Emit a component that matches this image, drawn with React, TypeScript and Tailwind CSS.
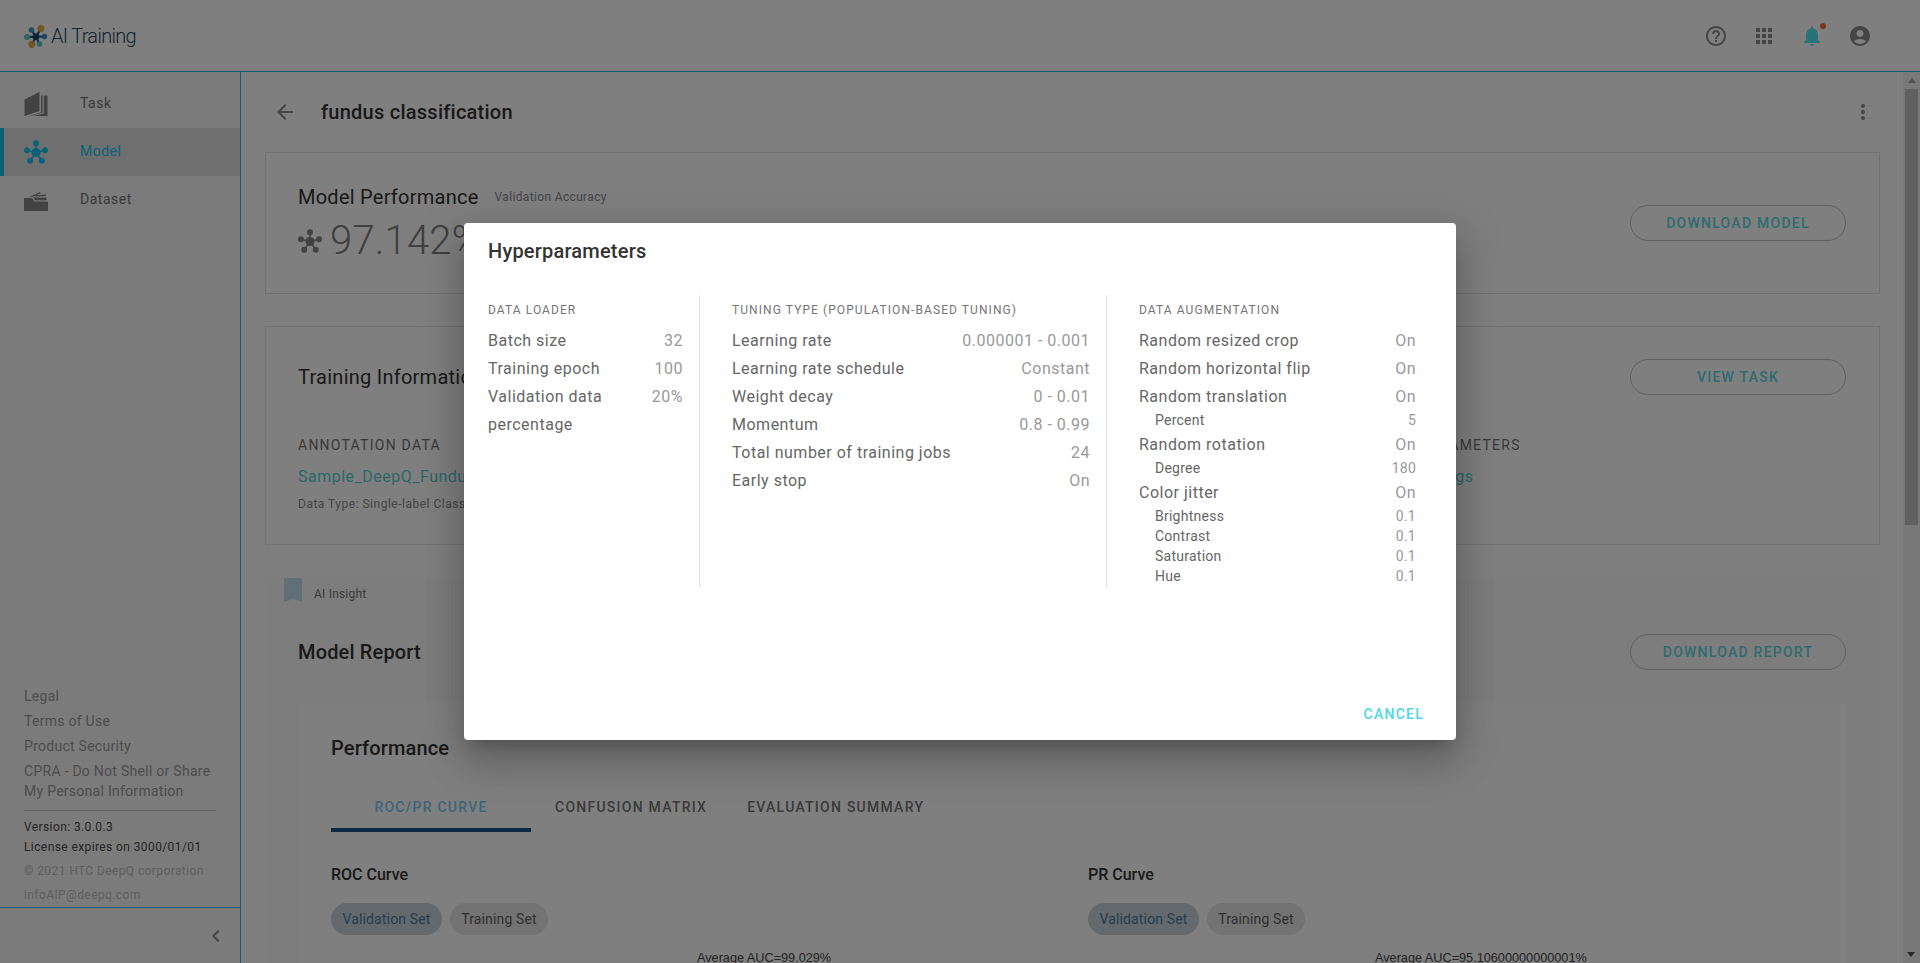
import React from 'react';
import {MdAccountCircle, MdApps, MdArrowBack, MdChevronLeft, MdHelpOutline, MdMoreVert, MdNotifications} from "react-icons/md";

const font = {fontFamily: 'Roboto, "Liberation Sans", sans-serif'};

// five dots round a hub, used for the Model nav item and the accuracy figure
function ModelIcon({className}: {className: string}) {
    const dots = [[12, 3.2], [2.9, 10.2], [21.1, 10.2], [6.2, 20.8], [17.8, 20.8]];
    return (
        <svg viewBox="0 0 24 24" className={className}>
            {dots.map(([x, y]) => (
                <g key={x}>
                    <line x1="12" y1="12.5" x2={x} y2={y} stroke="currentColor" strokeWidth="1.5"/>
                    <circle cx={x} cy={y} r="3" fill="currentColor"/>
                </g>
            ))}
            <circle cx="12" cy="12.5" r="4.6" fill="currentColor"/>
        </svg>
    );
}

function Logo() {
    const dots: [number, number, number, string][] = [
        [7.5, 6, 2.8, "#3f9ad0"],
        [17, 4.5, 3.4, "#e0ac4a"],
        [20.5, 12.5, 2.7, "#2f8fc8"],
        [15.5, 20, 2.8, "#5cc4c4"],
        [7.8, 20.5, 3.4, "#e0ac4a"],
        [3, 13, 3, "#5cc4c4"],
    ];
    return (
        <svg viewBox="0 0 24 24" className="h-[24px] w-[24px]">
            {dots.map(([x, y, r, c]) => (
                <g key={x}>
                    <line x1="12" y1="12.7" x2={x} y2={y} stroke="#1c4a78" strokeWidth="2"/>
                    <circle cx={x} cy={y} r={r} fill={c}/>
                </g>
            ))}
            <circle cx="12" cy="12.7" r="3.4" fill="#1c4a78"/>
        </svg>
    );
}

function TaskIcon() {
    return (
        <svg viewBox="0 0 24 24" className="h-[24px] w-[24px] text-[#858585]" fill="currentColor">
            <path d="M.5 7.5 15.5 0v19L.5 24z"/>
            <path d="M17 3.5h1.6V20.5L7 24h-1l11-3.8z"/>
            <path d="M19.8 3.5H23.5V24H9l10.8-2.4z"/>
        </svg>
    );
}

function DatasetIcon() {
    return (
        <svg viewBox="0 0 24 24" className="h-[24px] w-[24px] translate-y-[1px] text-[#858585]" fill="currentColor">
            <path d="M0 9 8 9 10.5 12.5 24 12.5V22H0z"/>
            <path d="M5.5 8 16 3l.6 1.3-8.6 3.7z"/>
            <path d="M9 8.5h13.5v2.8H11z"/>
            <path d="M9.5 6.5 22 5.5v1.5l-10 .6z"/>
        </svg>
    );
}

function OutlineButton({children}: {children: React.ReactNode}) {
    return (
        <button className="flex h-[36px] w-[216px] items-center justify-center rounded-full border border-[#c0c0c0] text-[14px] font-medium tracking-[1.25px] text-[#5ed8de]">
            {children}
        </button>
    );
}

function Chips() {
    return (
        <div className="mt-[16px] flex gap-2 text-[14px] tracking-[0.15px]">
            <span className="flex h-[32px] w-[111px] items-center justify-center rounded-full bg-[#c8d2da] text-[#4d7ba0]">Validation Set</span>
            <span className="flex h-[32px] w-[98px] items-center justify-center rounded-full bg-[#e6e6e6] text-[#616161]">Training Set</span>
        </div>
    );
}

const loader = [
    ["Batch size", "32"],
    ["Training epoch", "100"],
    ["Validation data percentage", "20%"],
];

const tuning = [
    ["Learning rate", "0.000001 - 0.001"],
    ["Learning rate schedule", "Constant"],
    ["Weight decay", "0 - 0.01"],
    ["Momentum", "0.8 - 0.99"],
    ["Total number of training jobs", "24"],
    ["Early stop", "On"],
];

const augmentation: [string, string, boolean][] = [
    ["Random resized crop", "On", false],
    ["Random horizontal flip", "On", false],
    ["Random translation", "On", false],
    ["Percent", "5", true],
    ["Random rotation", "On", false],
    ["Degree", "180", true],
    ["Color jitter", "On", false],
    ["Brightness", "0.1", true],
    ["Contrast", "0.1", true],
    ["Saturation", "0.1", true],
    ["Hue", "0.1", true],
];

function Row({label, value}: {label: string; value: string}) {
    return (
        <div className="flex translate-y-px justify-between text-[16px] leading-[28px] tracking-[0.5px]">
            <span className="max-w-[140px] text-[#666] data-[wide=true]:max-w-none" data-wide={label !== "Validation data percentage"}>{label}</span>
            <span className="text-[#999]">{value}</span>
        </div>
    );
}

function Hyperparameters() {
    return (
        <div className="absolute inset-0 flex items-center justify-center bg-black/50">
            <div className="flex h-[517px] w-[992px] flex-col rounded bg-white shadow-[0_11px_15px_-7px_rgba(0,0,0,0.2),0_24px_38px_3px_rgba(0,0,0,0.14),0_9px_46px_8px_rgba(0,0,0,0.12)]">
                <h2 className="pl-6 pt-[16px] text-[20px] font-medium leading-[24px] tracking-[0.2px] text-[#333]">Hyperparameters</h2>
                <div className="mt-[32px] flex h-[292px] pl-6">
                    <div className="w-[212px] border-r border-[#e0e0e0] pr-[16px]">
                        <h3 className="h-[31px] pt-[7px] text-[12px] leading-[16px] tracking-[1.08px] text-[#757575]">DATA LOADER</h3>
                        {loader.map(([l, v]) => <Row key={l} label={l} value={v}/>)}
                    </div>
                    <div className="w-[407px] border-r border-[#e0e0e0] pl-8 pr-[16px]">
                        <h3 className="h-[31px] pt-[7px] text-[12px] leading-[16px] tracking-[1.08px] text-[#757575]">TUNING TYPE (POPULATION-BASED TUNING)</h3>
                        {tuning.map(([l, v]) => <Row key={l} label={l} value={v}/>)}
                    </div>
                    <div className="w-[309px] pl-8">
                        <h3 className="h-[31px] pt-[7px] text-[12px] leading-[16px] tracking-[1.08px] text-[#757575]">DATA AUGMENTATION</h3>
                        {augmentation.map(([l, v, sub]) => sub ? (
                            <div key={l} className="flex h-[20px] justify-between pl-4 text-[14px] leading-[20px] tracking-[0.25px]">
                                <span className="text-[#666]">{l}</span>
                                <span className="text-[#999]">{v}</span>
                            </div>
                        ) : <Row key={l} label={l} value={v}/>)}
                    </div>
                </div>
                <div className="mt-auto flex justify-end pb-2 pr-[32px]">
                    <button className="h-[36px] text-[14px] font-medium tracking-[1.25px] text-[#4dd8e6]">CANCEL</button>
                </div>
            </div>
        </div>
    );
}

export default function App() {
    return (
        <div className="relative flex h-[963px] w-full flex-col overflow-hidden bg-white" style={font}>
            <header className="flex h-[72px] shrink-0 items-center border-b border-[#2bb8d8] pl-6 pr-[48px]">
                <Logo/>
                <span className="ml-[3px] text-[20px] font-light tracking-[-0.7px] text-[#2a4a60]">AI Training</span>
                <div className="ml-auto flex items-center gap-6 text-[#8a8a8a]">
                    <MdHelpOutline size={24}/>
                    <MdApps size={24}/>
                    <div className="relative">
                        <MdNotifications size={24} className="text-[#4fe6f0]"/>
                        <span className="absolute right-[-2px] top-[-1px] h-[6px] w-[6px] rounded-full bg-[#ff6a2a]"/>
                    </div>
                    <MdAccountCircle size={24}/>
                </div>
            </header>

            <div className="flex min-h-0 flex-1">
                <aside className="flex w-[241px] shrink-0 flex-col border-r border-[#14c0e8] bg-[#f6f6f6]">
                    <nav className="pt-2 text-[14px] tracking-[0.5px]">
                        <a className="flex h-[48px] items-center pl-6 text-[#757575]" href="#">
                            <TaskIcon/>
                            <span className="ml-8 -translate-y-[1px]">Task</span>
                        </a>
                        <a className="flex h-[48px] items-center border-l-4 border-[#12c4f0] bg-[#dfdfdf] pl-5 text-[#12c4f0]" href="#">
                            <ModelIcon className="h-[24px] w-[24px]"/>
                            <span className="ml-8 -translate-y-[1px]">Model</span>
                        </a>
                        <a className="flex h-[48px] items-center pl-6 text-[#757575]" href="#">
                            <DatasetIcon/>
                            <span className="ml-8 -translate-y-[1px]">Dataset</span>
                        </a>
                    </nav>
                    <div className="mt-auto px-6 text-[#9a9a9a]">
                        <div className="text-[14px] tracking-[0.27px]">
                            <p className="leading-[25px]">Legal</p>
                            <p className="leading-[25px]">Terms of Use</p>
                            <p className="leading-[25px]">Product Security</p>
                            <p className="mt-[2px] whitespace-nowrap leading-[20px]">CPRA - Do Not Shell or Share<br/>My Personal Information</p>
                        </div>
                        <div className="mt-[9px] border-t border-[#c8c8c8]"/>
                        <p className="mt-[6px] text-[12px] leading-[20px] tracking-[0.4px] text-[#4a4a4a]">Version: 3.0.0.3</p>
                        <p className="text-[12px] leading-[20px] tracking-[0.4px] text-[#4a4a4a]">License expires on 3000/01/01</p>
                        <p className="mt-[2px] text-[12px] leading-[24px] tracking-[0.4px] text-[#bdbdbd]">© 2021 HTC DeepQ corporation</p>
                        <p className="text-[12px] leading-[24px] tracking-[0.4px] text-[#bdbdbd]">infoAIP@deepq.com</p>
                    </div>
                    <div className="flex h-[56px] shrink-0 items-center justify-end border-t border-[#14c0e8] pr-3 text-[#8a8a8a]">
                        <MdChevronLeft size={24}/>
                    </div>
                </aside>

                <main className="min-w-0 flex-1 overflow-hidden pl-6 pr-[23px]">
                    <div className="flex h-[80px] items-center">
                        <MdArrowBack size={24} className="ml-2 text-[#8a8a8a]"/>
                        <h1 className="ml-[24px] text-[20px] font-medium tracking-[0.25px] text-[#333]">fundus classification</h1>
                        <MdMoreVert size={24} className="ml-auto mr-[5px] text-[#8a8a8a]"/>
                    </div>

                    <section className="flex h-[142px] items-center justify-between border border-[#e4e4e4] pl-[32px] pr-[33px]">
                        <div className="translate-y-[1px]">
                            <div className="flex items-center">
                                <h2 className="text-[20px] leading-[28px] tracking-[0.25px] text-[#333]">Model Performance</h2>
                                <span className="ml-[16px] text-[12px] tracking-[0.35px] text-[#8a8a8a]">Validation Accuracy</span>
                            </div>
                            <div className="mt-[6px] flex h-[48px] items-center text-[#808080]">
                                <ModelIcon className="h-[24px] w-[24px] text-[#858585]"/>
                                <span className="ml-[8px] text-[40px] font-light tracking-[0.2px]">97.142%</span>
                            </div>
                        </div>
                        <OutlineButton>DOWNLOAD MODEL</OutlineButton>
                    </section>

                    <section className="mt-[32px] h-[219px] border border-[#e4e4e4] pl-[32px] pr-[33px] pt-[32px]">
                        <div className="flex items-center justify-between">
                            <h2 className="text-[20px] tracking-[0.25px] text-[#333]">Training Information</h2>
                            <OutlineButton>VIEW TASK</OutlineButton>
                        </div>
                        <div className="mt-[40px] flex">
                            <div className="w-[1072px]">
                                <p className="text-[14px] leading-[20px] tracking-[1.25px] text-[#757575]">ANNOTATION DATA</p>
                                <p className="mt-[10px] text-[16px] leading-[24px] tracking-[0.5px] text-[#56d0d0]">Sample_DeepQ_Fundus</p>
                                <p className="mt-[7px] text-[12px] leading-[16px] tracking-[0.5px] text-[#8a8a8a]">Data Type: Single-label Classification</p>
                            </div>
                            <div>
                                <p className="text-[14px] leading-[20px] tracking-[1.25px] text-[#757575]">HYPERPARAMETERS</p>
                                <p className="mt-[10px] text-[16px] leading-[24px] tracking-[0.5px] text-[#56d0d0]">View Settings</p>
                            </div>
                        </div>
                    </section>

                    <section className="mt-[32px] bg-[#fbfbfb]">
                        <div className="flex items-center pl-[19px]">
                            <svg viewBox="0 0 18 24" className="h-[24px] w-[18px] text-[#c0e0ec]" fill="currentColor">
                                <path d="M0 0h18v24l-9-3-9 3z"/>
                            </svg>
                            <span className="ml-[12px] pt-2 text-[12px] tracking-[0.2px] text-[#757575]">AI Insight</span>
                        </div>
                        <div className="mt-[31px] flex items-center justify-between pl-[33px] pr-[34px]">
                            <h2 className="text-[20px] font-medium tracking-[0.15px] text-[#333]">Model Report</h2>
                            <OutlineButton>DOWNLOAD REPORT</OutlineButton>
                        </div>
                        <div className="ml-[33px] mr-[33px] mt-[33px] h-[400px] bg-white pl-[33px] pt-[31px]">
                            <h3 className="text-[20px] font-medium leading-[28px] tracking-[0.15px] text-[#333]">Performance</h3>
                            <div className="mt-[20px] flex h-[50px] text-[14px] font-medium tracking-[1.25px]">
                                <div className="flex w-[200px] items-center justify-center border-b-4 border-[#1a5080] pt-[4px] text-[#7ec8f0]">ROC/PR CURVE</div>
                                <div className="ml-[24px] flex items-center text-[#757575]">CONFUSION MATRIX</div>
                                <div className="ml-[40px] flex items-center text-[#757575]">EVALUATION SUMMARY</div>
                            </div>
                            <div className="mt-[31px] flex">
                                <div className="w-[757px]">
                                    <h4 className="text-[16px] font-medium leading-[24px] text-[#333]">ROC Curve</h4>
                                    <Chips/>
                                    <p className="ml-[366px] mt-[15px] text-[12.7px] leading-[16px] text-[#444]" style={{fontFamily: '"Liberation Sans", sans-serif'}}>Average AUC=99.029%</p>
                                </div>
                                <div>
                                    <h4 className="text-[16px] font-medium leading-[24px] text-[#333]">PR Curve</h4>
                                    <Chips/>
                                    <p className="ml-[287px] mt-[15px] whitespace-nowrap text-[12.7px] leading-[16px] text-[#444]" style={{fontFamily: '"Liberation Sans", sans-serif'}}>Average AUC=95.10600000000001%</p>
                                </div>
                            </div>
                        </div>
                    </section>
                </main>

                <div className="relative w-[17px] shrink-0 bg-[#f1f1f1]">
                    <span className="mx-auto mt-[6px] block h-0 w-0 border-x-[4px] border-b-[5px] border-x-transparent border-b-[#a3a3a3]"/>
                    <div className="mx-auto mt-[6px] h-[436px] w-[13px] bg-[#c1c1c1]"/>
                    <span className="absolute bottom-[6px] left-[4px] h-0 w-0 border-x-[4px] border-t-[5px] border-x-transparent border-t-[#505050]"/>
                </div>
            </div>

            <Hyperparameters/>
        </div>
    );
}
